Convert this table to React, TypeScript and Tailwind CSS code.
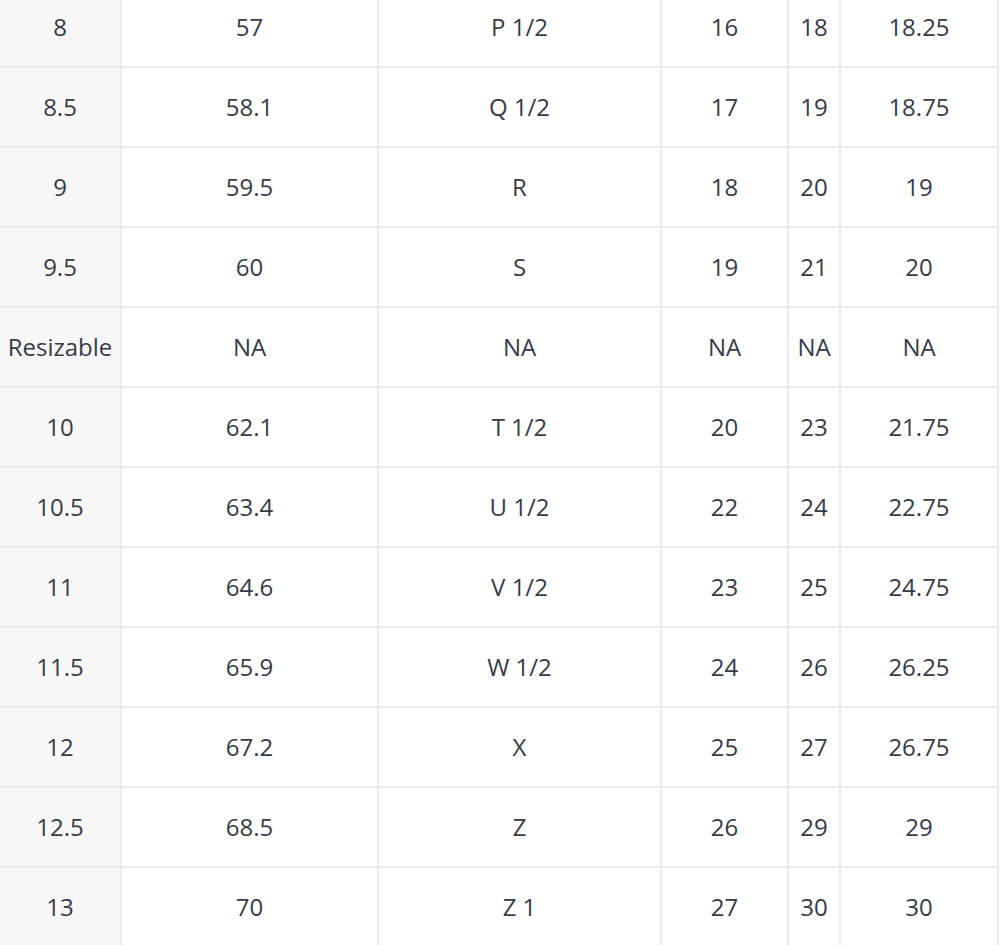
const rows: string[][] = [
  ["8", "57", "P 1/2", "16", "18", "18.25"],
  ["8.5", "58.1", "Q 1/2", "17", "19", "18.75"],
  ["9", "59.5", "R", "18", "20", "19"],
  ["9.5", "60", "S", "19", "21", "20"],
  ["Resizable", "NA", "NA", "NA", "NA", "NA"],
  ["10", "62.1", "T 1/2", "20", "23", "21.75"],
  ["10.5", "63.4", "U 1/2", "22", "24", "22.75"],
  ["11", "64.6", "V 1/2", "23", "25", "24.75"],
  ["11.5", "65.9", "W 1/2", "24", "26", "26.25"],
  ["12", "67.2", "X", "25", "27", "26.75"],
  ["12.5", "68.5", "Z", "26", "29", "29"],
  ["13", "70", "Z 1", "27", "30", "30"],
];

export default function App() {
  return (
    <div className="w-[1005px] h-[945px] overflow-hidden bg-white">
      <div
        className="-mt-[12px] w-[999px] grid grid-cols-[122px_257px_283px_127px_52px_158px] text-[24px] text-[#363b48]"
        style={{ fontFamily: '"Open Sans", sans-serif' }}
      >
        {rows.map((r, i) =>
          r.map((c, j) => (
            <div
              key={`${i}-${j}`}
              className={`h-[80px] flex items-center justify-center border-r-2 border-b-2 border-[#ebebeb] ${
                j === 0 ? "bg-[#f7f7f7]" : "bg-white"
              }`}
            >
              {c}
            </div>
          ))
        )}
      </div>
    </div>
  );
}
